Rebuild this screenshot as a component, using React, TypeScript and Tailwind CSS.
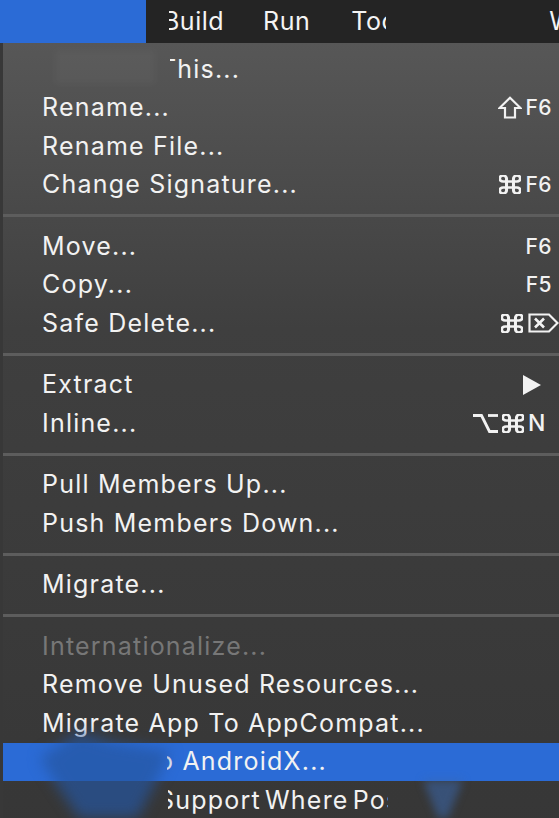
import React from "react";

// keyboard glyphs drawn to match the macOS menu symbols
const Shift = () => (
  <svg width="24" height="23" viewBox="0 0 24 23" fill="none" stroke="#f2f2f2" strokeWidth="2.2" strokeLinejoin="miter">
    <path d="M12 1.8 L22.5 12 H17 V21.5 H7 V12 H1.5 Z" />
  </svg>
);

const Cmd = () => (
  <svg width="22" height="19" viewBox="2.5 2.5 19 19" preserveAspectRatio="none" fill="none" stroke="#f2f2f2" strokeWidth="2.6" strokeLinecap="round" strokeLinejoin="round">
    <path d="M15 6v12a3 3 0 1 0 3-3H6a3 3 0 1 0 3 3V6a3 3 0 1 0-3 3h12a3 3 0 1 0-3-3" />
  </svg>
);

const Opt = () => (
  <svg width="27" height="20" viewBox="0 0 27 20" fill="none" stroke="#f2f2f2" strokeWidth="2.8">
    <path d="M1 2.5h8.5l8 16h8.5" />
    <path d="M16 2.5h10" />
  </svg>
);

const DelFwd = () => (
  <svg width="31" height="20" viewBox="0 0 31 20" fill="none" stroke="#f2f2f2" strokeWidth="2.2" strokeLinejoin="miter">
    <path d="M1.5 1.5 H21 L29.5 10 L21 18.5 H1.5 Z" />
    <path d="M7 5.5 L16 14.5 M16 5.5 L7 14.5" strokeWidth="2.6" />
  </svg>
);

const Tri = () => (
  <svg width="18" height="20" viewBox="0 0 18 20">
    <polygon points="0,0 18,10 0,20" fill="#f2f2f2" />
  </svg>
);

type Row = {
  label: string;
  shortcut?: React.ReactNode;
  disabled?: boolean;
  highlight?: boolean;
  clip?: { left: number; shift: number; width?: number; tight?: boolean };
};

type Item = Row | "sep";

const items: Item[] = [
  { label: "This...", clip: { left: 170, shift: -10 } },
  { label: "Rename...", shortcut: <><Shift /><span className="ml-[3px]">F6</span></> },
  { label: "Rename File..." },
  { label: "Change Signature...", shortcut: <><Cmd /><span className="ml-[4px]">F6</span></> },
  "sep",
  { label: "Move...", shortcut: "F6" },
  { label: "Copy...", shortcut: "F5" },
  { label: "Safe Delete...", shortcut: <><Cmd /><span className="ml-[5px] mr-[-7px]"><DelFwd /></span></> },
  "sep",
  { label: "Extract", shortcut: <span className="mr-[11px]"><Tri /></span> },
  {
    label: "Inline...",
    shortcut: (
      <span className="mr-[6px] flex items-center">
        <Opt />
        <span className="ml-[3px]"><Cmd /></span>
        <span className="ml-[4px] text-[23px]">N</span>
      </span>
    ),
  },
  "sep",
  { label: "Pull Members Up..." },
  { label: "Push Members Down..." },
  "sep",
  { label: "Migrate..." },
  "sep",
  { label: "Internationalize...", disabled: true },
  { label: "Remove Unused Resources..." },
  { label: "Migrate App To AppCompat..." },
  { label: "o AndroidX...", highlight: true, clip: { left: 167, shift: -9 } },
  { label: "Support Where Possible", clip: { left: 168, shift: -10, width: 220, tight: true } },
];

function MenuRow({ row }: { row: Row }) {
  const color = row.disabled ? "text-[#777777]" : "text-[#f2f2f2]";
  const text = `block whitespace-nowrap text-[25px] tracking-[1.2px] ${color}`;
  return (
    <div
      className={`relative flex h-[38.5px] items-center justify-between pr-[7px] ${
        row.highlight ? "bg-[#2b6bd6]" : ""
      } ${row.clip ? "" : "pl-[39px]"}`}
    >
      {row.clip ? (
        <div className="overflow-hidden" style={{ marginLeft: row.clip.left - 3, width: row.clip.width }}>
          <span
            className={`${text} ${row.clip.tight ? "[word-spacing:-4px]" : ""}`}
            style={{ marginLeft: row.clip.shift }}
          >
            {row.label}
          </span>
        </div>
      ) : (
        <span className={text}>{row.label}</span>
      )}
      {row.shortcut && (
        <span className="flex items-center whitespace-nowrap text-[21px] font-medium tracking-[0.5px] text-[#f2f2f2]">
          {row.shortcut}
        </span>
      )}
    </div>
  );
}

export default function App() {
  return (
    <div className="relative h-[818px] w-[559px] overflow-hidden bg-[#363636] font-['Inter','DejaVu_Sans',sans-serif]">
      {/* menu bar */}
      <div className="flex h-[43px] items-center overflow-hidden bg-[#242424] text-[25px] tracking-[0.5px] text-[#f4f4f4]">
        <div className="h-full w-[146px] shrink-0 bg-[#2b6bd6]" />
        <div className="relative flex h-full items-center">
          <span className="ml-[17px] whitespace-nowrap">Build</span>
          <div className="absolute left-0 top-0 h-full w-[23px] bg-[#242424]" />
        </div>
        <span className="ml-[39px] whitespace-nowrap">Run</span>
        <div className="ml-[41px] w-[35px] shrink-0 overflow-hidden">
          <span className="whitespace-nowrap">Tools</span>
        </div>
        <span className="ml-[163px] whitespace-nowrap">W</span>
      </div>

      {/* menu panel */}
      <div className="border-l-[3px] border-[#383838] bg-linear-to-b from-[#575757] via-[#3f3f3f] via-35% to-[#363636] pt-[7px]">
        {items.map((it, i) =>
          it === "sep" ? (
            <div key={i} className="flex h-[23px] items-center">
              <div className="h-[3px] w-full bg-[#5d5d5d]" />
            </div>
          ) : (
            <MenuRow key={i} row={it} />
          )
        )}
        <div className="h-[40px]" />
      </div>

      {/* blurred patches left in the screenshot */}
      <div className="pointer-events-none absolute left-[55px] top-[50px] h-[34px] w-[100px] bg-white/[0.03] blur-[3px]" />
      <div className="pointer-events-none absolute left-[40px] top-[732px] blur-[7px]">
        <div className="h-[86px] w-[130px] bg-[#2556a0]/70 [clip-path:polygon(30%_0,55%_12%,100%_22%,92%_50%,75%_100%,30%_100%,10%_55%,0_30%)]" />
      </div>
      <div className="pointer-events-none absolute left-[423px] top-[780px] blur-[4px]">
        <div className="h-[38px] w-[40px] bg-[#3a68ad]/55 [clip-path:polygon(0_0,100%_0,62%_100%,38%_100%)]" />
      </div>
    </div>
  );
}
